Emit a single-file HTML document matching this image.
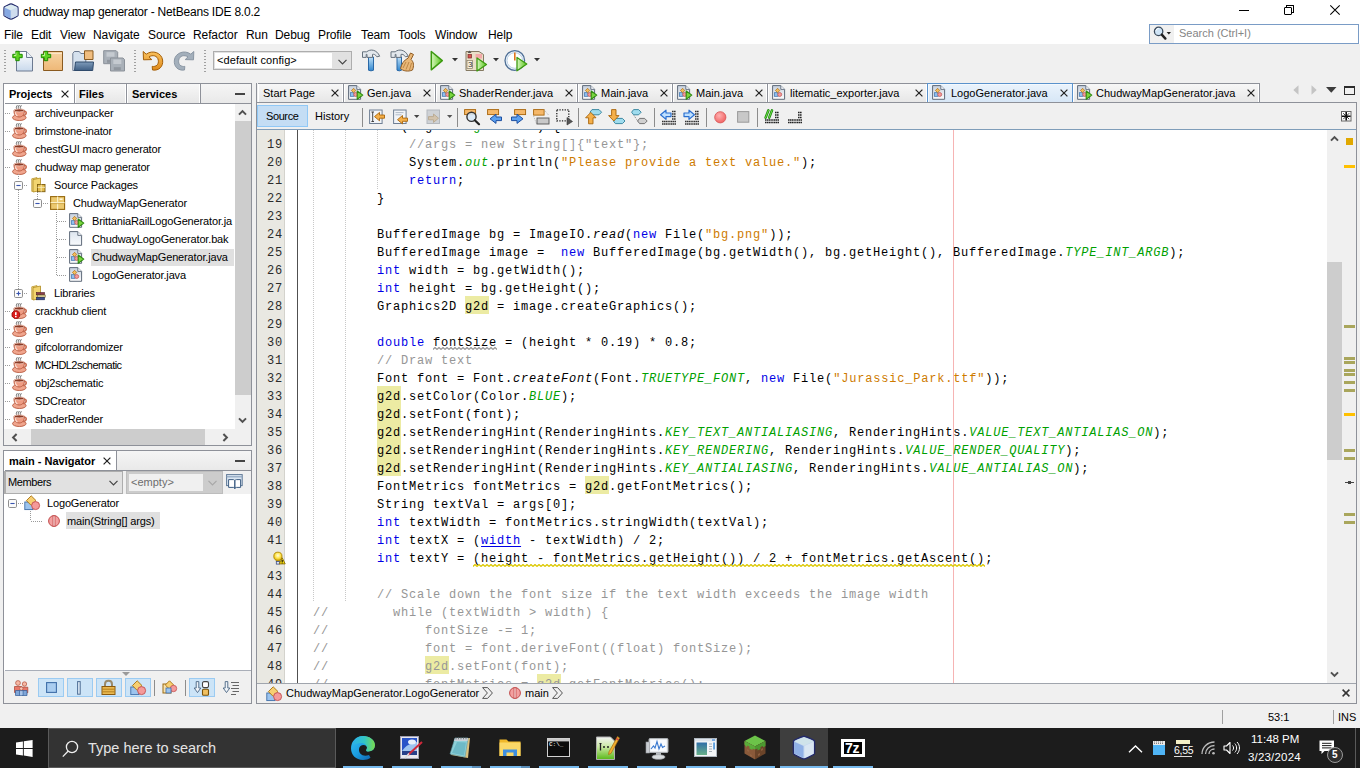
<!DOCTYPE html>
<html>
<head>
<meta charset="utf-8">
<title>chudway map generator - NetBeans IDE 8.0.2</title>
<style>
*{box-sizing:border-box;margin:0;padding:0}
html,body{width:1360px;height:768px;overflow:hidden;background:#f0f0f0}
body{font-family:"Liberation Sans",sans-serif;font-size:11px;color:#000;position:relative;line-height:1}
.a{position:absolute}
svg{position:absolute;overflow:visible}
#title{position:absolute;left:0;top:0;width:1360px;height:23px;background:#fff}
#title .t{position:absolute;left:23px;top:5px;font-size:12px;letter-spacing:-0.2px;white-space:nowrap;line-height:14px}
#menu{position:absolute;left:0;top:23px;width:1360px;height:21px;background:#fff}
#menu span{position:absolute;top:5px;font-size:12px;white-space:nowrap;line-height:14px;letter-spacing:-0.1px}
#toolbar{position:absolute;left:0;top:45px;width:1360px;height:33px;background:#f0f0f0}
.grip{position:absolute;top:5px;width:3px;height:22px;background-image:linear-gradient(#a0a0a0 1px,transparent 1px);background-size:2px 3px;background-repeat:repeat-y}
.combo{position:absolute;border:1px solid #adadad;background:#e1e1e1}
.panel{position:absolute;border:1px solid #8e9199;background:#fff}
.tabrow{position:absolute;left:0;top:0;right:0;height:20px;background:linear-gradient(#f5f5f5,#e9e9e9);border-bottom:1px solid #8e9199}
.tab{position:absolute;top:0;height:19px;border-right:1px solid #8e9199;white-space:nowrap;background:linear-gradient(#f7f7f7,#e7e7e7);box-shadow:inset -1px 0 0 #fff, inset 1px 0 0 #fff}
.tab.sel{background:#fff;height:19px}
.tab.esel{background:linear-gradient(#eaf3fc,#d6e6f6);height:20px;border-color:#5a92cc !important;box-shadow:-1px 0 0 #5a92cc, inset 1px 1px 0 #f4f9fe}
.tab .x{position:absolute;top:5px}
.tab b,.tab i{position:absolute;top:4px;font-style:normal;line-height:13px}
.row{position:absolute;left:0;height:18px;white-space:nowrap}
.row span{position:absolute;top:3px;line-height:13px;letter-spacing:-0.15px}
.hl{position:absolute;background:#e0e0e0}
#taskbar{position:absolute;left:0;top:728px;width:1360px;height:40px;background:#1c1c1c}
#tsearch{position:absolute;left:48px;top:0;width:288px;height:40px;background:#333;border:1px solid #5a5a5a}
#tsearch .ph{position:absolute;left:39px;top:10px;font-size:14.5px;color:#e4e4e4;white-space:nowrap;line-height:18px}
.tul{position:absolute;top:38px;height:2px;background:#76b9ed}
#status{position:absolute;left:0;top:704px;width:1360px;height:24px;background:#f0f0f0}
.code{font-family:"Liberation Mono",monospace;font-size:12px;letter-spacing:0.8px;line-height:18px;white-space:pre}
.ln{position:absolute;left:0;width:1044px;height:18px}
.ln .n{position:absolute;left:10px;top:2px;color:#2b2b2b}
.ln .c{position:absolute;left:56px;top:2px}
.k{color:#0000e6}.s{color:#ce7b00}.cm{color:#969696}.sf{color:#00a000;font-style:italic}.it{font-style:italic}
.lk{color:#0000e6;text-decoration:underline;text-underline-offset:2px}
.mo{background:linear-gradient(#eceba3,#eceba3) 0 0/100% 18px no-repeat;padding-top:4px}
.sb{position:absolute;background:#f0f0f0}
.thumb{position:absolute;background:#cdcdcd}
</style>
</head>
<body>
<div id="title"><svg style="left:3px;top:3px" width="16" height="17" viewBox="0 0 24 25">
<path d="M12 1.200c1 0 9.800 3.600 10.300 4.500.4.700.4 12.500 0 13.300-.5.900-9.300 5-10.300 5s-9.800-4.100-10.300-5c-.4-.8-.4-12.600 0-13.300C2.200 4.800 11 1.200 12 1.200z" fill="#c5d8ee" stroke="#232a6a" stroke-width="1.800"/>
<path d="M2.300 6.300L12 10.600l9.700-4.300L12 2.300z" fill="#dcebf0"/><path d="M2.300 6.800L11.500 11v12L2.300 18.600z" fill="#86a8e2"/><path d="M21.700 6.800L12.500 11v12l9.200-4.400z" fill="#cfdcee"/>
</svg><span class="t">chudway map generator - NetBeans IDE 8.0.2</span><div class="a" style="left:1239px;top:10px;width:10px;height:1px;background:#000"></div><div class="a" style="left:1284px;top:7px;width:8px;height:8px;border:1px solid #000;border-radius:1px"></div><div class="a" style="left:1286px;top:5px;width:8px;height:8px;border:1px solid #000;border-left:none;border-bottom:none;border-radius:0 1px 0 0"></div><div class="a" style="left:1286px;top:5px;width:1px;height:2px;background:#000"></div><div class="a" style="left:1292px;top:12px;width:2px;height:1px;background:#000"></div><svg style="left:1330px;top:5px" width="10" height="10" viewBox="0 0 10 10"><path d="M0.300 0.300 L9.700 9.700 M9.700 0.300 L0.300 9.700" stroke="#000" stroke-width="1.050" fill="none"/></svg></div>
<div id="menu"><span style="left:4px">File</span><span style="left:31px">Edit</span><span style="left:60px">View</span><span style="left:93px">Navigate</span><span style="left:148px">Source</span><span style="left:193px">Refactor</span><span style="left:246px">Run</span><span style="left:275px">Debug</span><span style="left:318px">Profile</span><span style="left:361px">Team</span><span style="left:398px">Tools</span><span style="left:435px">Window</span><span style="left:488px">Help</span><div class="a" style="left:1149px;top:1px;width:210px;height:20px;background:#fff;border:1px solid #7a9cc6"></div><div class="a" style="left:1150px;top:2px;width:24px;height:18px;background:#f0f0f0"></div><svg style="left:1153px;top:3px" width="18" height="15" viewBox="0 0 18 15">
<circle cx="5.600" cy="5.400" r="4.200" fill="#cfe4f6" stroke="#3a4a5c" stroke-width="1.300"/><path d="M2.800 4.800a3 3 0 0 1 3-2.400" stroke="#fff" stroke-width="1" fill="none"/><path d="M8.800 8.600 L12.400 12.600" stroke="#222" stroke-width="2.400" stroke-linecap="round"/>
<path d="M13.600 6h4.400l-2.200 2.600z" fill="#222"/></svg><span style="left:1179px;top:3px;color:#858585;font-size:11px;letter-spacing:0">Search (Ctrl+I)</span></div>
<div id="toolbar"><div class="grip" style="left:4px"></div><div class="grip" style="left:134px"></div><div class="grip" style="left:204px"></div><svg style="left:12px;top:5px" width="22" height="22" viewBox="0 0 22 22"><defs><linearGradient id="gpage" x1="0" y1="0" x2="0" y2="1"><stop offset="0" stop-color="#ffffff"/><stop offset="1" stop-color="#c9d9ec"/></linearGradient><linearGradient id="gpg" x1="0" y1="0" x2="0" y2="1"><stop offset="0" stop-color="#c6d0dd"/><stop offset="1" stop-color="#fdfdfe"/></linearGradient><linearGradient id="gpg2" x1="0" y1="0" x2="0" y2="1"><stop offset="0" stop-color="#dde5ef"/><stop offset="1" stop-color="#f8fafc"/></linearGradient></defs><path d="M4.5 1.5h10l6 6v13.5h-16z" fill="url(#gpage)" stroke="#6c7a90" stroke-width="1"/><path d="M14.5 1.5v6h6" fill="#e9f0f8" stroke="#6c7a90" stroke-width="1"/><path d="M0.8 4.3h3v-3h3.4v3h3v3.4h-3v3h-3.4v-3h-3z" fill="#5fd321" stroke="#1d8a00" stroke-width="1"/><path d="M2.0 5.5h2v-3" stroke="#d8ffb8" stroke-width="1" fill="none" opacity=".8"/></svg><svg style="left:41px;top:5px" width="23" height="22" viewBox="0 0 23 22"><defs><linearGradient id="gbox" x1="0" y1="0" x2="0" y2="1"><stop offset="0" stop-color="#f7d3a2"/><stop offset="1" stop-color="#eeb877"/></linearGradient></defs><path d="M2.5 1.5h19v19h-19z" fill="url(#gbox)" stroke="#8a5a1f" stroke-width="1"/><path d="M3 3.5h18" stroke="#fbe6c8" stroke-width="1"/><path d="M0.3 4.3h3v-3h3.4v3h3v3.4h-3v3h-3.4v-3h-3z" fill="#5fd321" stroke="#1d8a00" stroke-width="1"/><path d="M1.5 5.5h2v-3" stroke="#d8ffb8" stroke-width="1" fill="none" opacity=".8"/></svg><svg style="left:72px;top:5px" width="22" height="22" viewBox="0 0 22 22"><defs><linearGradient id="gfold" x1="0" y1="0" x2="0" y2="1"><stop offset="0" stop-color="#7f9cbb"/><stop offset="1" stop-color="#3f5f84"/></linearGradient></defs><path d="M0.8 20.5v-17l1.5-2h5l1.5 2h5v17z" fill="#d5e1ee" stroke="#6c7a90" stroke-width="1"/><path d="M12.5 0.8h8.5v8.7h-8.5z" fill="#f0bd7f" stroke="#8a5a1f" stroke-width="1"/><path d="M2.5 20.5l1-8.5h18l-0.8 8.5z" fill="url(#gfold)" stroke="#2f4a6b" stroke-width="1"/></svg><svg style="left:103px;top:5px" width="23" height="22" viewBox="0 0 23 22"><path d="M0.7 0.7h12.5l1.5 1.5v11.5h-14z" fill="#a9b0b8" stroke="#8b9199" stroke-width="1"/><rect x="3.5" y="2.2" width="8" height="4.5" fill="#c5cad0"/><rect x="4" y="9.8" width="7" height="3" fill="#90969e"/><path d="M7.5 8h12.5l1.5 1.5v11.5h-14z" fill="#a9b0b8" stroke="#8b9199" stroke-width="1"/><rect x="10.3" y="9.5" width="8" height="4.5" fill="#c5cad0"/><rect x="10.8" y="17.2" width="7" height="3" fill="#90969e"/></svg><svg style="left:142px;top:5px" width="23" height="22" viewBox="0 0 23 22"><defs><linearGradient id="gundo" x1="0" y1="0" x2="0" y2="1"><stop offset="0" stop-color="#f9c15e"/><stop offset="1" stop-color="#e08a1a"/></linearGradient></defs><path d="M1.2 1.5 L1.5 9.8 L9.8 9.6 L7 6.9 C10.5 4.6 15.5 5.5 16.3 10.2 C17 14.6 14 17 10.2 16.4 L10.5 20 C17 21 21.5 16.5 20.6 10 C19.6 2.8 10.5 -0.5 4.2 4.2 Z" fill="url(#gundo)" stroke="#a45f08" stroke-width="1" stroke-linejoin="round"/></svg><svg style="left:172px;top:5px" width="23" height="22" viewBox="0 0 23 22"><path d="M21.8 1.5 L21.5 9.8 L13.2 9.6 L16 6.9 C12.5 4.6 7.5 5.5 6.7 10.2 C6 14.6 9 17 12.8 16.4 L12.5 20 C6 21 1.5 16.5 2.4 10 C3.4 2.8 12.5 -0.5 18.8 4.2 Z" fill="#a3afbb" stroke="#8a96a3" stroke-width="1" stroke-linejoin="round"/></svg><div class="combo" style="left:213px;top:6px;width:139px;height:19px"></div><div class="a" style="left:215px;top:8px;width:117px;height:15px;background:#fff"></div><span class="a" style="left:217px;top:9px;font-size:11px;line-height:13px;white-space:nowrap;letter-spacing:.1px">&lt;default config&gt;</span><svg style="left:338px;top:14px" width="9" height="6" viewBox="0 0 9 6"><path d="M0.5 0.8 L4.5 4.8 L8.5 0.8" fill="none" stroke="#444" stroke-width="1.2"/></svg><svg style="left:361px;top:4px" width="20" height="23" viewBox="0 0 20 23"><defs><linearGradient id="ghan" x1="0" y1="0" x2="0" y2="1"><stop offset="0" stop-color="#bfe0f7"/><stop offset="1" stop-color="#2f86cf"/></linearGradient></defs><path d="M7.5 8h5v13.2q-2.5 1.3-5 0z" fill="url(#ghan)" stroke="#2a68a6" stroke-width="1"/><path d="M1.500 2.800h4.200c3.500-3 10-2.500 13 4.400l-2.800.6c-1.600-2.400-3-2.800-4.400-2.400v3h-5.500v-3h-.8v3h-3.700z" fill="#e3e8ed" stroke="#66727e" stroke-width="1" stroke-linejoin="round"/></svg><svg style="left:390px;top:4px" width="25" height="23" viewBox="0 0 25 23"><path d="M7 8h4.5v13.2q-2.2 1.3-4.5 0z" fill="url(#ghan)" stroke="#2a68a6" stroke-width="1"/><path d="M1 2.800h4.200c3.500-3 10-2.500 13 4.400l-2.800.6c-1.600-2.400-3-2.800-4.400-2.400v3h-5v-3h-.8v3h-4.200z" fill="#e3e8ed" stroke="#66727e" stroke-width="1" stroke-linejoin="round"/><path d="M20.5 4 L23.5 5.5 L21 10.5 C24 13 24 17 22.5 21 C18 23 13 22 10.5 19.5 C11.5 15 14 11 18 9.2 Z" fill="#e9b777" stroke="#8f5b22" stroke-width="1" stroke-linejoin="round"/><path d="M13 19l3-6M16 20.5l3-7.5M19.5 21l2-7" stroke="#b07a3a" stroke-width=".8" fill="none"/></svg><svg style="left:430px;top:5px" width="14" height="22" viewBox="0 0 14 22"><defs><linearGradient id="grun" x1="0" y1="0" x2="1" y2="0"><stop offset="0" stop-color="#d9f7c0"/><stop offset="1" stop-color="#57c41a"/></linearGradient></defs><path d="M1.3 1.5 L12.3 10.6 L1.3 19.8 Z" fill="url(#grun)" stroke="#3c9a10" stroke-width="1.5" stroke-linejoin="round"/></svg><svg style="left:451.5px;top:13px" width="6" height="4" viewBox="0 0 6 4"><path d="M0 0h6l-3 3.2z" fill="#333"/></svg><svg style="left:465px;top:4px" width="23" height="23" viewBox="0 0 23 23"><path d="M1 2.5h13l4.5 3v16h-17.5z" fill="#eadfc8" stroke="#857a63" stroke-width="1"/><rect x="10.5" y="5" width="6.5" height="4.5" fill="#f4a9a9"/><path d="M4.5 1.5l2 2.5h-4z" fill="#555"/><rect x="3" y="5.5" width="3.5" height="3.5" fill="#d9534f" stroke="#7a2a28" stroke-width=".7"/><rect x="2" y="11.5" width="5.5" height="8" fill="#f7f0dd" stroke="#857a63" stroke-width=".7"/><path d="M12 9 L21.5 15.5 L12 22 Z" fill="url(#grun)" stroke="#3c9a10" stroke-width="1.3" stroke-linejoin="round"/></svg><span class="a" style="left:468px;top:16px;font-size:8px;line-height:8px;color:#333">3</span><svg style="left:492.7px;top:13px" width="6" height="4" viewBox="0 0 6 4"><path d="M0 0h6l-3 3.2z" fill="#333"/></svg><svg style="left:504px;top:4px" width="24" height="23" viewBox="0 0 24 23"><circle cx="10.8" cy="11.5" r="9.8" fill="#eaf3fb" stroke="#4f6f96" stroke-width="1.3"/><circle cx="10.8" cy="11.5" r="7.8" fill="#fff" stroke="#bcd0e4" stroke-width="1"/><path d="M10.8 3.5v8" stroke="#e0761a" stroke-width="1.6"/><path d="M13 8.5 L22.8 15 L13 21.8 Z" fill="url(#grun)" stroke="#3c9a10" stroke-width="1.3" stroke-linejoin="round"/></svg><svg style="left:534px;top:13px" width="6" height="4" viewBox="0 0 6 4"><path d="M0 0h6l-3 3.2z" fill="#333"/></svg></div>
<div class="panel" style="left:3px;top:83px;width:249px;height:363px"><div class="a" style="left:1px;top:0;width:246px;height:361px"><div class="tabrow"><div class="tab sel" style="left:-1px;width:71px"><b style="left:5px">Projects</b><svg style="left:57px;top:6px" width="8" height="8" viewBox="0 0 8 8"><path d="M0.6 0.6L7.4 7.4M7.4 0.6L0.6 7.4" stroke="#222" stroke-width="1.2" fill="none"/></svg></div><div class="tab" style="left:70px;width:52px"><b style="left:4px">Files</b></div><div class="tab" style="left:122px;width:74px"><b style="left:5px">Services</b></div><div class="a" style="left:230px;top:9px;width:10px;height:2px;background:#444"></div></div><div class="a" style="left:0;top:20px;width:230px;height:325px;overflow:hidden"><div class="a" style="left:0px;top:9px;width:6px;height:1px;background-image:linear-gradient(90deg,#9a9a9a 1px,transparent 1px);background-size:2px 1px"></div><svg style="left:7px;top:1px" width="16" height="16" viewBox="0 0 16 16"><path d="M5.300 0.200l-1 2.200.8 2.200M7.300 0l-1 2.400.8 2.400M9.300 0.200l-1 2.200.8 2.200" stroke="#5a5a5a" stroke-width=".9" fill="none"/><ellipse cx="7.3" cy="12.6" rx="6.8" ry="2.9" fill="#f0a58d" stroke="#b85a40" stroke-width=".9"/><path d="M11.2 6.5c3.6-1.2 4.4 3 0.2 4.2" fill="none" stroke="#c9694e" stroke-width="1.5"/><path d="M2 5.2h10.4c0.3 3.8-1.2 6.6-5.2 6.8c-4-0.2-5.5-3-5.2-6.8z" fill="#ee9b82" stroke="#b85a40" stroke-width=".9"/><ellipse cx="7.2" cy="5.4" rx="5" ry="1.5" fill="#8a3b26" stroke="#f6cdbf" stroke-width=".8"/><path d="M3.4 7.2c0 2 0.8 3.2 2 3.9" stroke="#fbe0d6" stroke-width="1.1" fill="none"/></svg><div class="row" style="top:0px"><span style="left:30px">archiveunpacker</span></div><div class="a" style="left:0px;top:27px;width:6px;height:1px;background-image:linear-gradient(90deg,#9a9a9a 1px,transparent 1px);background-size:2px 1px"></div><svg style="left:7px;top:19px" width="16" height="16" viewBox="0 0 16 16"><path d="M5.300 0.200l-1 2.200.8 2.200M7.300 0l-1 2.400.8 2.400M9.300 0.200l-1 2.200.8 2.200" stroke="#5a5a5a" stroke-width=".9" fill="none"/><ellipse cx="7.3" cy="12.6" rx="6.8" ry="2.9" fill="#f0a58d" stroke="#b85a40" stroke-width=".9"/><path d="M11.2 6.5c3.6-1.2 4.4 3 0.2 4.2" fill="none" stroke="#c9694e" stroke-width="1.5"/><path d="M2 5.2h10.4c0.3 3.8-1.2 6.6-5.2 6.8c-4-0.2-5.5-3-5.2-6.8z" fill="#ee9b82" stroke="#b85a40" stroke-width=".9"/><ellipse cx="7.2" cy="5.4" rx="5" ry="1.5" fill="#8a3b26" stroke="#f6cdbf" stroke-width=".8"/><path d="M3.4 7.2c0 2 0.8 3.2 2 3.9" stroke="#fbe0d6" stroke-width="1.1" fill="none"/></svg><div class="row" style="top:18px"><span style="left:30px">brimstone-inator</span></div><div class="a" style="left:0px;top:45px;width:6px;height:1px;background-image:linear-gradient(90deg,#9a9a9a 1px,transparent 1px);background-size:2px 1px"></div><svg style="left:7px;top:37px" width="16" height="16" viewBox="0 0 16 16"><path d="M5.300 0.200l-1 2.200.8 2.200M7.300 0l-1 2.400.8 2.400M9.300 0.200l-1 2.200.8 2.200" stroke="#5a5a5a" stroke-width=".9" fill="none"/><ellipse cx="7.3" cy="12.6" rx="6.8" ry="2.9" fill="#f0a58d" stroke="#b85a40" stroke-width=".9"/><path d="M11.2 6.5c3.6-1.2 4.4 3 0.2 4.2" fill="none" stroke="#c9694e" stroke-width="1.5"/><path d="M2 5.2h10.4c0.3 3.8-1.2 6.6-5.2 6.8c-4-0.2-5.5-3-5.2-6.8z" fill="#ee9b82" stroke="#b85a40" stroke-width=".9"/><ellipse cx="7.2" cy="5.4" rx="5" ry="1.5" fill="#8a3b26" stroke="#f6cdbf" stroke-width=".8"/><path d="M3.4 7.2c0 2 0.8 3.2 2 3.9" stroke="#fbe0d6" stroke-width="1.1" fill="none"/></svg><div class="row" style="top:36px"><span style="left:30px">chestGUI macro generator</span></div><div class="a" style="left:0px;top:63px;width:6px;height:1px;background-image:linear-gradient(90deg,#9a9a9a 1px,transparent 1px);background-size:2px 1px"></div><svg style="left:7px;top:55px" width="16" height="16" viewBox="0 0 16 16"><path d="M5.300 0.200l-1 2.200.8 2.200M7.300 0l-1 2.400.8 2.400M9.300 0.200l-1 2.200.8 2.200" stroke="#5a5a5a" stroke-width=".9" fill="none"/><ellipse cx="7.3" cy="12.6" rx="6.8" ry="2.9" fill="#f0a58d" stroke="#b85a40" stroke-width=".9"/><path d="M11.2 6.5c3.6-1.2 4.4 3 0.2 4.2" fill="none" stroke="#c9694e" stroke-width="1.5"/><path d="M2 5.2h10.4c0.3 3.8-1.2 6.6-5.2 6.8c-4-0.2-5.5-3-5.2-6.8z" fill="#ee9b82" stroke="#b85a40" stroke-width=".9"/><ellipse cx="7.2" cy="5.4" rx="5" ry="1.5" fill="#8a3b26" stroke="#f6cdbf" stroke-width=".8"/><path d="M3.4 7.2c0 2 0.8 3.2 2 3.9" stroke="#fbe0d6" stroke-width="1.1" fill="none"/></svg><div class="row" style="top:54px"><span style="left:30px">chudway map generator</span></div><svg style="left:9px;top:77px" width="9" height="9" viewBox="0 0 9 9"><rect x="0.5" y="0.5" width="8" height="8" rx="1.2" fill="#fbfbfb" stroke="#8f8f8f" stroke-width="1"/><path d="M2.4 4.5h4.2" stroke="#3a55b0" stroke-width="1.1"/></svg><div class="a" style="left:19px;top:81px;width:4px;height:1px;background-image:linear-gradient(90deg,#9a9a9a 1px,transparent 1px);background-size:2px 1px"></div><svg style="left:26px;top:73px" width="15" height="16" viewBox="0 0 15 16"><path d="M0.8 1.8 L6 0.6 L6 13.2 L0.8 14.4 Z" fill="#f7e29a" stroke="#b99326" stroke-width=".8"/><path d="M2 2.6 L9.5 1 L9.5 13.6 L2 15 Z" fill="#f2d470" stroke="#b08a1e" stroke-width=".8"/><rect x="6.5" y="7.5" width="7.5" height="7.2" fill="#e3bc4e" stroke="#7d5c0e" stroke-width=".9"/><path d="M6.5 10.3h7.5M10.2 7.5v7.2" stroke="#fbeeb8" stroke-width=".9"/></svg><div class="row" style="top:72px"><span style="left:49px">Source Packages</span></div><svg style="left:28px;top:95px" width="9" height="9" viewBox="0 0 9 9"><rect x="0.5" y="0.5" width="8" height="8" rx="1.2" fill="#fbfbfb" stroke="#8f8f8f" stroke-width="1"/><path d="M2.4 4.5h4.2" stroke="#3a55b0" stroke-width="1.1"/></svg><div class="a" style="left:38px;top:99px;width:5px;height:1px;background-image:linear-gradient(90deg,#9a9a9a 1px,transparent 1px);background-size:2px 1px"></div><svg style="left:45px;top:92px" width="15.2" height="14" viewBox="0 0 15.2 14"><rect x="0.6" y="0.6" width="14" height="12.8" fill="#ecc96f" stroke="#96690f" stroke-width="1.1"/><path d="M0.6 6.6h14M7.6 0.6v12.8" stroke="#fbefc4" stroke-width="1.2"/><path d="M0.6 7.6h14" stroke="#b88b2a" stroke-width=".6"/><rect x="9.6" y="2.4" width="3" height="1.6" fill="#fff7dc"/></svg><div class="row" style="top:90px"><span style="left:68px">ChudwayMapGenerator</span></div><div class="a" style="left:52px;top:117px;width:10px;height:1px;background-image:linear-gradient(90deg,#9a9a9a 1px,transparent 1px);background-size:2px 1px"></div><svg style="left:64px;top:109px" width="16" height="15" viewBox="0 0 16 15"><path d="M0.6 0.6h8.2l3.800 3.800v9.900h-12z" fill="url(#gpg)" stroke="#5f6b7a" stroke-width="1"/><path d="M8.800 0.600v3.800h3.800" fill="#f4f7fb" stroke="#5f6b7a" stroke-width=".9"/><rect x="2.300" y="7.700" width="3.800" height="3.600" fill="#8fc0ee" stroke="#3a6ea8" stroke-width=".7"/><path d="M5.600 3.300l2.200 2.200-2.200 2.200-2.200-2.200z" fill="#f4bc5a" stroke="#a86a10" stroke-width=".7"/><circle cx="7.700" cy="9.500" r="2" fill="#f29a9a" stroke="#c05050" stroke-width=".7"/><path d="M9.200 6 L14.800 10.100 L9.200 14.300 Z" fill="#7ad63f" stroke="#2f8a10" stroke-width="1.100" stroke-linejoin="round"/></svg><div class="row" style="top:108px"><span style="left:87px">BrittaniaRailLogoGenerator.ja</span></div><div class="a" style="left:52px;top:135px;width:10px;height:1px;background-image:linear-gradient(90deg,#9a9a9a 1px,transparent 1px);background-size:2px 1px"></div><svg style="left:64px;top:127px" width="16" height="15" viewBox="0 0 16 15"><path d="M0.6 0.6h8.2l3.800 3.800v9.900h-12z" fill="url(#gpg2)" stroke="#5f6b7a" stroke-width="1"/><path d="M8.800 0.600v3.800h3.800" fill="#f4f7fb" stroke="#5f6b7a" stroke-width=".9"/></svg><div class="row" style="top:126px"><span style="left:87px">ChudwayLogoGenerator.bak</span></div><div class="a" style="left:52px;top:153px;width:10px;height:1px;background-image:linear-gradient(90deg,#9a9a9a 1px,transparent 1px);background-size:2px 1px"></div><svg style="left:64px;top:145px" width="16" height="15" viewBox="0 0 16 15"><path d="M0.6 0.6h8.2l3.800 3.800v9.900h-12z" fill="url(#gpg)" stroke="#5f6b7a" stroke-width="1"/><path d="M8.800 0.600v3.800h3.800" fill="#f4f7fb" stroke="#5f6b7a" stroke-width=".9"/><rect x="2.300" y="7.700" width="3.800" height="3.600" fill="#8fc0ee" stroke="#3a6ea8" stroke-width=".7"/><path d="M5.600 3.300l2.200 2.200-2.200 2.200-2.200-2.200z" fill="#f4bc5a" stroke="#a86a10" stroke-width=".7"/><circle cx="7.700" cy="9.500" r="2" fill="#f29a9a" stroke="#c05050" stroke-width=".7"/><path d="M9.200 6 L14.800 10.100 L9.200 14.300 Z" fill="#7ad63f" stroke="#2f8a10" stroke-width="1.100" stroke-linejoin="round"/></svg><div class="hl" style="left:86px;top:145px;width:143px;height:17px"></div><div class="row" style="top:144px"><span style="left:87px">ChudwayMapGenerator.java</span></div><div class="a" style="left:52px;top:171px;width:10px;height:1px;background-image:linear-gradient(90deg,#9a9a9a 1px,transparent 1px);background-size:2px 1px"></div><svg style="left:64px;top:163px" width="16" height="15" viewBox="0 0 16 15"><path d="M0.6 0.6h8.2l3.800 3.800v9.900h-12z" fill="url(#gpg)" stroke="#5f6b7a" stroke-width="1"/><path d="M8.800 0.600v3.800h3.800" fill="#f4f7fb" stroke="#5f6b7a" stroke-width=".9"/><rect x="2.300" y="7.700" width="3.800" height="3.600" fill="#8fc0ee" stroke="#3a6ea8" stroke-width=".7"/><path d="M5.600 3.300l2.200 2.200-2.200 2.200-2.200-2.200z" fill="#f4bc5a" stroke="#a86a10" stroke-width=".7"/><circle cx="7.700" cy="9.500" r="2" fill="#f29a9a" stroke="#c05050" stroke-width=".7"/></svg><div class="row" style="top:162px"><span style="left:87px">LogoGenerator.java</span></div><svg style="left:9px;top:185px" width="9" height="9" viewBox="0 0 9 9"><rect x="0.5" y="0.5" width="8" height="8" rx="1.2" fill="#fbfbfb" stroke="#8f8f8f" stroke-width="1"/><path d="M2.4 4.5h4.2" stroke="#3a55b0" stroke-width="1.1"/><path d="M4.5 2.4v4.2" stroke="#3a55b0" stroke-width="1.1"/></svg><div class="a" style="left:19px;top:189px;width:4px;height:1px;background-image:linear-gradient(90deg,#9a9a9a 1px,transparent 1px);background-size:2px 1px"></div><svg style="left:26px;top:181px" width="15" height="16" viewBox="0 0 15 16"><path d="M0.8 1.8 L6 0.6 L6 13.2 L0.8 14.4 Z" fill="#f7e29a" stroke="#b99326" stroke-width=".8"/><path d="M2 2.6 L9.5 1 L9.5 13.6 L2 15 Z" fill="#f2d470" stroke="#b08a1e" stroke-width=".8"/><rect x="5.5" y="7.6" width="8" height="2.2" fill="#8c3c4c" stroke="#4a1a24" stroke-width=".6"/><rect x="6.2" y="10" width="8" height="2.2" fill="#e0d2a0" stroke="#6a5a20" stroke-width=".6"/><rect x="5.5" y="12.4" width="8" height="2.4" fill="#3c4e90" stroke="#18234e" stroke-width=".6"/></svg><div class="row" style="top:180px"><span style="left:49px">Libraries</span></div><div class="a" style="left:0px;top:207px;width:6px;height:1px;background-image:linear-gradient(90deg,#9a9a9a 1px,transparent 1px);background-size:2px 1px"></div><svg style="left:7px;top:199px" width="16" height="16" viewBox="0 0 16 16"><path d="M5.300 0.200l-1 2.200.8 2.200M7.300 0l-1 2.400.8 2.400M9.300 0.200l-1 2.200.8 2.200" stroke="#5a5a5a" stroke-width=".9" fill="none"/><ellipse cx="7.3" cy="12.6" rx="6.8" ry="2.9" fill="#f0a58d" stroke="#b85a40" stroke-width=".9"/><path d="M11.2 6.5c3.6-1.2 4.4 3 0.2 4.2" fill="none" stroke="#c9694e" stroke-width="1.5"/><path d="M2 5.2h10.4c0.3 3.8-1.2 6.6-5.2 6.8c-4-0.2-5.5-3-5.2-6.8z" fill="#ee9b82" stroke="#b85a40" stroke-width=".9"/><ellipse cx="7.2" cy="5.4" rx="5" ry="1.5" fill="#8a3b26" stroke="#f6cdbf" stroke-width=".8"/><path d="M3.4 7.2c0 2 0.8 3.2 2 3.9" stroke="#fbe0d6" stroke-width="1.1" fill="none"/><path d="M2.200 7.800h3.200l2.200 2.200v3.200l-2.200 2.200h-3.200l-2.200-2.200v-3.200z" fill="#dc1c1c" stroke="#900c0c" stroke-width=".8"/><rect x="3" y="9.200" width="1.600" height="3" fill="#fff"/><rect x="3" y="13" width="1.600" height="1.300" fill="#fff"/></svg><div class="row" style="top:198px"><span style="left:30px">crackhub client</span></div><div class="a" style="left:0px;top:225px;width:6px;height:1px;background-image:linear-gradient(90deg,#9a9a9a 1px,transparent 1px);background-size:2px 1px"></div><svg style="left:7px;top:217px" width="16" height="16" viewBox="0 0 16 16"><path d="M5.300 0.200l-1 2.200.8 2.200M7.300 0l-1 2.400.8 2.400M9.300 0.200l-1 2.200.8 2.200" stroke="#5a5a5a" stroke-width=".9" fill="none"/><ellipse cx="7.3" cy="12.6" rx="6.8" ry="2.9" fill="#f0a58d" stroke="#b85a40" stroke-width=".9"/><path d="M11.2 6.5c3.6-1.2 4.4 3 0.2 4.2" fill="none" stroke="#c9694e" stroke-width="1.5"/><path d="M2 5.2h10.4c0.3 3.8-1.2 6.6-5.2 6.8c-4-0.2-5.5-3-5.2-6.8z" fill="#ee9b82" stroke="#b85a40" stroke-width=".9"/><ellipse cx="7.2" cy="5.4" rx="5" ry="1.5" fill="#8a3b26" stroke="#f6cdbf" stroke-width=".8"/><path d="M3.4 7.2c0 2 0.8 3.2 2 3.9" stroke="#fbe0d6" stroke-width="1.1" fill="none"/></svg><div class="row" style="top:216px"><span style="left:30px">gen</span></div><div class="a" style="left:0px;top:243px;width:6px;height:1px;background-image:linear-gradient(90deg,#9a9a9a 1px,transparent 1px);background-size:2px 1px"></div><svg style="left:7px;top:235px" width="16" height="16" viewBox="0 0 16 16"><path d="M5.300 0.200l-1 2.200.8 2.200M7.300 0l-1 2.400.8 2.400M9.300 0.200l-1 2.200.8 2.200" stroke="#5a5a5a" stroke-width=".9" fill="none"/><ellipse cx="7.3" cy="12.6" rx="6.8" ry="2.9" fill="#f0a58d" stroke="#b85a40" stroke-width=".9"/><path d="M11.2 6.5c3.6-1.2 4.4 3 0.2 4.2" fill="none" stroke="#c9694e" stroke-width="1.5"/><path d="M2 5.2h10.4c0.3 3.8-1.2 6.6-5.2 6.8c-4-0.2-5.5-3-5.2-6.8z" fill="#ee9b82" stroke="#b85a40" stroke-width=".9"/><ellipse cx="7.2" cy="5.4" rx="5" ry="1.5" fill="#8a3b26" stroke="#f6cdbf" stroke-width=".8"/><path d="M3.4 7.2c0 2 0.8 3.2 2 3.9" stroke="#fbe0d6" stroke-width="1.1" fill="none"/></svg><div class="row" style="top:234px"><span style="left:30px">gifcolorrandomizer</span></div><div class="a" style="left:0px;top:261px;width:6px;height:1px;background-image:linear-gradient(90deg,#9a9a9a 1px,transparent 1px);background-size:2px 1px"></div><svg style="left:7px;top:253px" width="16" height="16" viewBox="0 0 16 16"><path d="M5.300 0.200l-1 2.200.8 2.200M7.300 0l-1 2.400.8 2.400M9.300 0.200l-1 2.200.8 2.200" stroke="#5a5a5a" stroke-width=".9" fill="none"/><ellipse cx="7.3" cy="12.6" rx="6.8" ry="2.9" fill="#f0a58d" stroke="#b85a40" stroke-width=".9"/><path d="M11.2 6.5c3.6-1.2 4.4 3 0.2 4.2" fill="none" stroke="#c9694e" stroke-width="1.5"/><path d="M2 5.2h10.4c0.3 3.8-1.2 6.6-5.2 6.8c-4-0.2-5.5-3-5.2-6.8z" fill="#ee9b82" stroke="#b85a40" stroke-width=".9"/><ellipse cx="7.2" cy="5.4" rx="5" ry="1.5" fill="#8a3b26" stroke="#f6cdbf" stroke-width=".8"/><path d="M3.4 7.2c0 2 0.8 3.2 2 3.9" stroke="#fbe0d6" stroke-width="1.1" fill="none"/></svg><div class="row" style="top:252px"><span style="left:30px;letter-spacing:-0.55px">MCHDL2schematic</span></div><div class="a" style="left:0px;top:279px;width:6px;height:1px;background-image:linear-gradient(90deg,#9a9a9a 1px,transparent 1px);background-size:2px 1px"></div><svg style="left:7px;top:271px" width="16" height="16" viewBox="0 0 16 16"><path d="M5.300 0.200l-1 2.200.8 2.200M7.300 0l-1 2.400.8 2.400M9.300 0.200l-1 2.200.8 2.200" stroke="#5a5a5a" stroke-width=".9" fill="none"/><ellipse cx="7.3" cy="12.6" rx="6.8" ry="2.9" fill="#f0a58d" stroke="#b85a40" stroke-width=".9"/><path d="M11.2 6.5c3.6-1.2 4.4 3 0.2 4.2" fill="none" stroke="#c9694e" stroke-width="1.5"/><path d="M2 5.2h10.4c0.3 3.8-1.2 6.6-5.2 6.8c-4-0.2-5.5-3-5.2-6.8z" fill="#ee9b82" stroke="#b85a40" stroke-width=".9"/><ellipse cx="7.2" cy="5.4" rx="5" ry="1.5" fill="#8a3b26" stroke="#f6cdbf" stroke-width=".8"/><path d="M3.4 7.2c0 2 0.8 3.2 2 3.9" stroke="#fbe0d6" stroke-width="1.1" fill="none"/></svg><div class="row" style="top:270px"><span style="left:30px">obj2schematic</span></div><div class="a" style="left:0px;top:297px;width:6px;height:1px;background-image:linear-gradient(90deg,#9a9a9a 1px,transparent 1px);background-size:2px 1px"></div><svg style="left:7px;top:289px" width="16" height="16" viewBox="0 0 16 16"><path d="M5.300 0.200l-1 2.200.8 2.200M7.300 0l-1 2.400.8 2.400M9.300 0.200l-1 2.200.8 2.200" stroke="#5a5a5a" stroke-width=".9" fill="none"/><ellipse cx="7.3" cy="12.6" rx="6.8" ry="2.9" fill="#f0a58d" stroke="#b85a40" stroke-width=".9"/><path d="M11.2 6.5c3.6-1.2 4.4 3 0.2 4.2" fill="none" stroke="#c9694e" stroke-width="1.5"/><path d="M2 5.2h10.4c0.3 3.8-1.2 6.6-5.2 6.8c-4-0.2-5.5-3-5.2-6.8z" fill="#ee9b82" stroke="#b85a40" stroke-width=".9"/><ellipse cx="7.2" cy="5.4" rx="5" ry="1.5" fill="#8a3b26" stroke="#f6cdbf" stroke-width=".8"/><path d="M3.4 7.2c0 2 0.8 3.2 2 3.9" stroke="#fbe0d6" stroke-width="1.1" fill="none"/></svg><div class="row" style="top:288px"><span style="left:30px">SDCreator</span></div><div class="a" style="left:0px;top:315px;width:6px;height:1px;background-image:linear-gradient(90deg,#9a9a9a 1px,transparent 1px);background-size:2px 1px"></div><svg style="left:7px;top:307px" width="16" height="16" viewBox="0 0 16 16"><path d="M5.300 0.200l-1 2.200.8 2.200M7.300 0l-1 2.400.8 2.400M9.300 0.200l-1 2.200.8 2.200" stroke="#5a5a5a" stroke-width=".9" fill="none"/><ellipse cx="7.3" cy="12.6" rx="6.8" ry="2.9" fill="#f0a58d" stroke="#b85a40" stroke-width=".9"/><path d="M11.2 6.5c3.6-1.2 4.4 3 0.2 4.2" fill="none" stroke="#c9694e" stroke-width="1.5"/><path d="M2 5.2h10.4c0.3 3.8-1.2 6.6-5.2 6.8c-4-0.2-5.5-3-5.2-6.8z" fill="#ee9b82" stroke="#b85a40" stroke-width=".9"/><ellipse cx="7.2" cy="5.4" rx="5" ry="1.5" fill="#8a3b26" stroke="#f6cdbf" stroke-width=".8"/><path d="M3.4 7.2c0 2 0.8 3.2 2 3.9" stroke="#fbe0d6" stroke-width="1.1" fill="none"/></svg><div class="row" style="top:306px"><span style="left:30px">shaderRender</span></div><div class="a" style="left:13px;top:86px;width:1px;height:99px;background-image:linear-gradient(#9a9a9a 1px,transparent 1px);background-size:1px 2px"></div><div class="a" style="left:13px;top:70px;width:1px;height:6px;background-image:linear-gradient(#9a9a9a 1px,transparent 1px);background-size:1px 2px"></div><div class="a" style="left:32px;top:88px;width:1px;height:7px;background-image:linear-gradient(#9a9a9a 1px,transparent 1px);background-size:1px 2px"></div><div class="a" style="left:51px;top:108px;width:1px;height:64px;background-image:linear-gradient(#9a9a9a 1px,transparent 1px);background-size:1px 2px"></div></div><div class="sb" style="left:230px;top:20px;width:16px;height:325px"></div><div class="thumb" style="left:230px;top:37px;width:16px;height:274px"></div><svg style="left:233px;top:25px" width="9" height="9" viewBox="0 0 9 9"><path d="M1 5.6 L4.5 2.1 L8 5.6" fill="none" stroke="#505050" stroke-width="2"/></svg><svg style="left:233px;top:333px" width="9" height="9" viewBox="0 0 9 9"><path d="M1 1.4 L4.5 4.9 L8 1.4" fill="none" stroke="#505050" stroke-width="2"/></svg><div class="sb" style="left:0;top:345px;width:230px;height:16px"></div><div class="thumb" style="left:26px;top:345px;width:174px;height:16px"></div><svg style="left:6px;top:349px" width="9" height="9" viewBox="0 0 9 9"><path d="M5.6 1 L2.1 4.5 L5.6 8" fill="none" stroke="#505050" stroke-width="2"/></svg><svg style="left:217px;top:349px" width="9" height="9" viewBox="0 0 9 9"><path d="M1.4 1 L4.9 4.5 L1.4 8" fill="none" stroke="#505050" stroke-width="2"/></svg><div class="sb" style="left:230px;top:345px;width:16px;height:16px"></div><div class="sb" style="left:-1px;top:345px;width:1px;height:16px"></div></div></div>
<div class="panel" style="left:3px;top:450px;width:249px;height:254px"><div class="a" style="left:1px;top:0;width:246px;height:252px"><div class="tabrow"><div class="tab sel" style="left:-1px;width:113px"><b style="left:5px">main - Navigator</b><svg style="left:99px;top:6px" width="8" height="8" viewBox="0 0 8 8"><path d="M0.6 0.6L7.4 7.4M7.4 0.6L0.6 7.4" stroke="#222" stroke-width="1.2" fill="none"/></svg></div><div class="a" style="left:230px;top:9px;width:10px;height:2px;background:#444"></div></div><div class="a" style="left:0;top:20px;width:246px;height:23px;background:#f0f0f0"></div><div class="combo" style="left:0;top:20px;width:118px;height:23px;background:#e1e1e1"></div><span class="a" style="left:3px;top:25px;line-height:13px;letter-spacing:-0.4px">Members</span><svg style="left:104px;top:29px" width="9" height="6" viewBox="0 0 9 6"><path d="M0.5 0.8 L4.5 4.8 L8.5 0.8" fill="none" stroke="#444" stroke-width="1.2"/></svg><div class="combo" style="left:121px;top:20px;width:97px;height:23px;background:#cccccc;border-color:#bdbdbd"></div><div class="a" style="left:124px;top:23px;width:74px;height:17px;background:#f0f0f0"></div><span class="a" style="left:126px;top:25px;line-height:13px;color:#6d6d6d">&lt;empty&gt;</span><svg style="left:203px;top:29px" width="9" height="6" viewBox="0 0 9 6"><path d="M0.5 0.8 L4.5 4.8 L8.5 0.8" fill="none" stroke="#a8a8a8" stroke-width="1.2"/></svg><svg style="left:221px;top:23px" width="17" height="16" viewBox="0 0 17 16"><rect x="0.6" y="0.6" width="15.6" height="11" fill="#dbe6f2" stroke="#5f7896" stroke-width="1"/><path d="M0.6 2.8h15.6" stroke="#8fa5bf" stroke-width="1.2"/><path d="M2.6 5.6h4.6c1 0 1.6.6 1.6 1.4v7.6c0-.8-.6-1.2-1.6-1.2H2.6zM14.6 5.6H10.4c-1 0-1.6.6-1.6 1.4v7.6c0-.8.6-1.2 1.6-1.2h4.2z" fill="#fff" stroke="#3f5f84" stroke-width="1"/></svg><svg style="left:3px;top:48px" width="9" height="9" viewBox="0 0 9 9"><rect x="0.5" y="0.5" width="8" height="8" rx="1.2" fill="#fbfbfb" stroke="#8f8f8f" stroke-width="1"/><path d="M2.4 4.5h4.2" stroke="#3a55b0" stroke-width="1.1"/></svg><div class="a" style="left:13px;top:52px;width:5px;height:1px;background-image:linear-gradient(90deg,#9a9a9a 1px,transparent 1px);background-size:2px 1px"></div><svg style="left:19px;top:44px" width="16" height="15" viewBox="0 0 16 15"><rect x="0.8" y="7" width="8.2" height="7.6" fill="#9cc4ee" stroke="#3f6ea8" stroke-width=".9"/><path d="M7.2 0.8l4.8 4.8-4.8 4.8-4.8-4.8z" fill="#f7cf72" stroke="#a8720e" stroke-width=".9"/><circle cx="11.6" cy="10.6" r="4" fill="#f49a9a" stroke="#c25050" stroke-width=".9"/></svg><div class="row" style="top:43px"><span style="left:42px">LogoGenerator</span></div><div class="a" style="left:25px;top:60px;width:1px;height:10px;background-image:linear-gradient(#9a9a9a 1px,transparent 1px);background-size:1px 2px"></div><div class="a" style="left:26px;top:70px;width:11px;height:1px;background-image:linear-gradient(90deg,#9a9a9a 1px,transparent 1px);background-size:2px 1px"></div><svg style="left:42.5px;top:64px" width="12" height="12" viewBox="0 0 12 12"><circle cx="6" cy="6" r="5.4" fill="#f3a0a0" stroke="#c24a4a" stroke-width="1"/><rect x="5" y="0.8" width="2" height="10.4" fill="#fde3e3" stroke="#c24a4a" stroke-width=".8"/></svg><div class="hl" style="left:61px;top:61px;width:94px;height:17px"></div><div class="row" style="top:61px"><span style="left:62px">main(String[] args)</span></div><div class="a" style="left:0;top:219px;width:246px;height:33px;background:#f0f0f0;border-top:1px solid #a9aeb8"></div><svg style="left:117px;top:221px" width="8" height="4" viewBox="0 0 8 4"><path d="M0 0h8l-4 4z" fill="#9a9a9a"/></svg><svg style="left:8px;top:229px" width="17" height="16" viewBox="0 0 17 16"><circle cx="5" cy="3" r="2.4" fill="#f6b8a4" stroke="#b0503c" stroke-width=".7"/><circle cx="11.5" cy="4" r="2.2" fill="#f6b8a4" stroke="#b0503c" stroke-width=".7"/><path d="M1.500 6.500h7v6h-7z" fill="#e8786a" stroke="#a8402e" stroke-width=".7"/><path d="M8.800 7.200h6v5.500h-6z" fill="#e8786a" stroke="#a8402e" stroke-width=".7"/><path d="M2.5 10.5h4.5v5h-4.5zM9 10.5h5v5h-5z" fill="#7fa6d8" stroke="#2f5a96" stroke-width=".7"/><circle cx="8.300" cy="8.600" r="1.700" fill="#f8c8b8" stroke="#b0503c" stroke-width=".6"/><path d="M6.5 10.6h3.6v4.9h-3.6z" fill="#a8c4e8" stroke="#2f5a96" stroke-width=".6"/></svg><div class="a" style="left:33px;top:227px;width:26px;height:19px;background:#cce4f7;border:1px solid #9bcbf2"></div><svg style="left:41px;top:231px" width="11" height="11" viewBox="0 0 11 11"><rect x="0.6" y="0.6" width="9.8" height="9.8" fill="#a9cdf0" stroke="#3f6ea8" stroke-width="1.1"/></svg><div class="a" style="left:61.5px;top:227px;width:26px;height:19px;background:#cce4f7;border:1px solid #9bcbf2"></div><svg style="left:72px;top:230px" width="4" height="14" viewBox="0 0 4 14"><rect x="0.6" y="0.6" width="2.6" height="12.6" fill="#dce9f6" stroke="#4f6f96" stroke-width="1"/></svg><div class="a" style="left:90.5px;top:227px;width:26px;height:19px;background:#cce4f7;border:1px solid #9bcbf2"></div><svg style="left:96px;top:228px" width="15" height="16" viewBox="0 0 15 16"><path d="M4 8V5.2c0-4.6 7-4.6 7 0V8" fill="none" stroke="#9a8a6a" stroke-width="2"/><rect x="1" y="7.5" width="13" height="8" fill="#e9b850" stroke="#8a5a0e" stroke-width="1"/><path d="M1.5 10.2h12M1.5 12.8h12" stroke="#b07a1a" stroke-width=".9"/></svg><div class="a" style="left:119.5px;top:227px;width:26px;height:19px;background:#cce4f7;border:1px solid #9bcbf2"></div><svg style="left:125px;top:229px" width="16" height="15" viewBox="0 0 16 15"><rect x="0.8" y="7" width="8.2" height="7.6" fill="#9cc4ee" stroke="#3f6ea8" stroke-width=".9"/><path d="M7.2 0.8l4.8 4.8-4.8 4.8-4.8-4.8z" fill="#f7cf72" stroke="#a8720e" stroke-width=".9"/><circle cx="11.6" cy="10.6" r="4" fill="#f49a9a" stroke="#c25050" stroke-width=".9"/></svg><div class="a" style="left:148.5px;top:229px;width:1px;height:16px;background:#8c8c8c"></div><svg style="left:157px;top:229px" width="16" height="16" viewBox="0 0 16 16"><rect x="1" y="4" width="8" height="9" fill="#f7e2b0" stroke="#9a6a12" stroke-width="1"/><path d="M7.5 0.8l4.2 4.2-4.2 4.2-4.2-4.2z" fill="#f7cf72" stroke="#a8720e" stroke-width=".9"/><circle cx="11.5" cy="8.5" r="3.2" fill="#f49a9a" stroke="#c25050" stroke-width=".8"/><rect x="4" y="8" width="5" height="5" fill="#9cc4ee" stroke="#3f6ea8" stroke-width=".8"/></svg><div class="a" style="left:180px;top:229px;width:1px;height:16px;background:#8c8c8c"></div><div class="a" style="left:184px;top:227px;width:26px;height:19px;background:#cce4f7;border:1px solid #9bcbf2"></div><svg style="left:189px;top:230px" width="16" height="15" viewBox="0 0 16 15"><path d="M2.200 0.600h2.600v6.400h2l-3.300 4.600-3.300-4.600h2z" fill="#eef3f8" stroke="#4a6482" stroke-width=".9" stroke-linejoin="round"/><rect x="8.5" y="0.6" width="6" height="6" rx="1.5" fill="#fff" stroke="#444" stroke-width="1.1"/><rect x="8.5" y="8.2" width="6" height="6" rx="1" fill="#f0c060" stroke="#7a5208" stroke-width="1.1"/></svg><div class="a" style="left:-1px;top:20px;width:1px;height:23px;background:#adadad"></div><div class="a" style="left:-1px;top:220px;width:1px;height:32px;background:#f0f0f0"></div><svg style="left:218px;top:230px" width="17" height="15" viewBox="0 0 17 15"><path d="M2.200 0.600h2.600v6.400h2l-3.300 4.600-3.300-4.600h2z" fill="#eef3f8" stroke="#4a6482" stroke-width=".9" stroke-linejoin="round"/><path d="M8 1.5h8M9.5 4.5h6.5M8 7.5h8M9.5 10.5h6.5M8 13.5h5" stroke="#666" stroke-width="1.2"/></svg></div></div>
<div class="a" style="left:256px;top:83px;width:1px;height:20px;background:#8e9199"></div><div class="tab" style="left:258px;top:83px;width:86px;height:19px;border-top:1px solid #8e9199"><i style="left:5px;top:3px">Start Page</i><svg style="left:73px;top:5px" width="8" height="8" viewBox="0 0 8 8"><path d="M0.6 0.6L7.4 7.4M7.4 0.6L0.6 7.4" stroke="#222" stroke-width="1.2" fill="none"/></svg></div><div class="tab" style="left:344px;top:83px;width:92px;height:19px;border-top:1px solid #8e9199"><svg style="left:4px;top:1px" width="16" height="15" viewBox="0 0 16 15"><path d="M0.6 0.6h8.2l3.800 3.800v9.900h-12z" fill="url(#gpg)" stroke="#5f6b7a" stroke-width="1"/><path d="M8.800 0.600v3.800h3.800" fill="#f4f7fb" stroke="#5f6b7a" stroke-width=".9"/><rect x="2.300" y="7.700" width="3.800" height="3.600" fill="#8fc0ee" stroke="#3a6ea8" stroke-width=".7"/><path d="M5.600 3.300l2.200 2.200-2.200 2.200-2.200-2.200z" fill="#f4bc5a" stroke="#a86a10" stroke-width=".7"/><circle cx="7.700" cy="9.500" r="2" fill="#f29a9a" stroke="#c05050" stroke-width=".7"/><path d="M9.200 6 L14.800 10.100 L9.200 14.300 Z" fill="#7ad63f" stroke="#2f8a10" stroke-width="1.100" stroke-linejoin="round"/></svg><i style="left:23px;top:3px">Gen.java</i><svg style="left:79px;top:5px" width="8" height="8" viewBox="0 0 8 8"><path d="M0.6 0.6L7.4 7.4M7.4 0.6L0.6 7.4" stroke="#222" stroke-width="1.2" fill="none"/></svg></div><div class="tab" style="left:436px;top:83px;width:142px;height:19px;border-top:1px solid #8e9199"><svg style="left:4px;top:1px" width="16" height="15" viewBox="0 0 16 15"><path d="M0.6 0.6h8.2l3.800 3.800v9.900h-12z" fill="url(#gpg)" stroke="#5f6b7a" stroke-width="1"/><path d="M8.800 0.600v3.800h3.800" fill="#f4f7fb" stroke="#5f6b7a" stroke-width=".9"/><rect x="2.300" y="7.700" width="3.800" height="3.600" fill="#8fc0ee" stroke="#3a6ea8" stroke-width=".7"/><path d="M5.600 3.300l2.200 2.200-2.200 2.200-2.200-2.200z" fill="#f4bc5a" stroke="#a86a10" stroke-width=".7"/><circle cx="7.700" cy="9.500" r="2" fill="#f29a9a" stroke="#c05050" stroke-width=".7"/><path d="M9.200 6 L14.800 10.100 L9.200 14.300 Z" fill="#7ad63f" stroke="#2f8a10" stroke-width="1.100" stroke-linejoin="round"/></svg><i style="left:23px;top:3px">ShaderRender.java</i><svg style="left:129px;top:5px" width="8" height="8" viewBox="0 0 8 8"><path d="M0.6 0.6L7.4 7.4M7.4 0.6L0.6 7.4" stroke="#222" stroke-width="1.2" fill="none"/></svg></div><div class="tab" style="left:578px;top:83px;width:95px;height:19px;border-top:1px solid #8e9199"><svg style="left:4px;top:1px" width="16" height="15" viewBox="0 0 16 15"><path d="M0.6 0.6h8.2l3.800 3.800v9.900h-12z" fill="url(#gpg)" stroke="#5f6b7a" stroke-width="1"/><path d="M8.800 0.600v3.800h3.800" fill="#f4f7fb" stroke="#5f6b7a" stroke-width=".9"/><rect x="2.300" y="7.700" width="3.800" height="3.600" fill="#8fc0ee" stroke="#3a6ea8" stroke-width=".7"/><path d="M5.600 3.300l2.200 2.200-2.200 2.200-2.200-2.200z" fill="#f4bc5a" stroke="#a86a10" stroke-width=".7"/><circle cx="7.700" cy="9.500" r="2" fill="#f29a9a" stroke="#c05050" stroke-width=".7"/><path d="M9.200 6 L14.800 10.100 L9.200 14.300 Z" fill="#7ad63f" stroke="#2f8a10" stroke-width="1.100" stroke-linejoin="round"/></svg><i style="left:23px;top:3px">Main.java</i><svg style="left:82px;top:5px" width="8" height="8" viewBox="0 0 8 8"><path d="M0.6 0.6L7.4 7.4M7.4 0.6L0.6 7.4" stroke="#222" stroke-width="1.2" fill="none"/></svg></div><div class="tab" style="left:673px;top:83px;width:95px;height:19px;border-top:1px solid #8e9199"><svg style="left:4px;top:1px" width="16" height="15" viewBox="0 0 16 15"><path d="M0.6 0.6h8.2l3.800 3.800v9.900h-12z" fill="url(#gpg)" stroke="#5f6b7a" stroke-width="1"/><path d="M8.800 0.600v3.800h3.800" fill="#f4f7fb" stroke="#5f6b7a" stroke-width=".9"/><rect x="2.300" y="7.700" width="3.800" height="3.600" fill="#8fc0ee" stroke="#3a6ea8" stroke-width=".7"/><path d="M5.600 3.300l2.200 2.200-2.200 2.200-2.200-2.200z" fill="#f4bc5a" stroke="#a86a10" stroke-width=".7"/><circle cx="7.700" cy="9.500" r="2" fill="#f29a9a" stroke="#c05050" stroke-width=".7"/><path d="M9.200 6 L14.800 10.100 L9.200 14.300 Z" fill="#7ad63f" stroke="#2f8a10" stroke-width="1.100" stroke-linejoin="round"/></svg><i style="left:23px;top:3px">Main.java</i><svg style="left:82px;top:5px" width="8" height="8" viewBox="0 0 8 8"><path d="M0.6 0.6L7.4 7.4M7.4 0.6L0.6 7.4" stroke="#222" stroke-width="1.2" fill="none"/></svg></div><div class="tab" style="left:768px;top:83px;width:160px;height:19px;border-top:1px solid #8e9199"><svg style="left:4px;top:1px" width="16" height="15" viewBox="0 0 16 15"><path d="M0.6 0.6h8.2l3.800 3.800v9.900h-12z" fill="url(#gpg)" stroke="#5f6b7a" stroke-width="1"/><path d="M8.800 0.600v3.800h3.800" fill="#f4f7fb" stroke="#5f6b7a" stroke-width=".9"/><rect x="2.300" y="7.700" width="3.800" height="3.600" fill="#8fc0ee" stroke="#3a6ea8" stroke-width=".7"/><path d="M5.600 3.300l2.200 2.200-2.200 2.200-2.200-2.200z" fill="#f4bc5a" stroke="#a86a10" stroke-width=".7"/><circle cx="7.700" cy="9.500" r="2" fill="#f29a9a" stroke="#c05050" stroke-width=".7"/></svg><i style="left:22px;top:3px">litematic_exporter.java</i><svg style="left:147px;top:5px" width="8" height="8" viewBox="0 0 8 8"><path d="M0.6 0.6L7.4 7.4M7.4 0.6L0.6 7.4" stroke="#222" stroke-width="1.2" fill="none"/></svg></div><div class="tab esel" style="left:928px;top:83px;width:145px;height:20px;border-top:1px solid #8e9199"><svg style="left:4px;top:1px" width="16" height="15" viewBox="0 0 16 15"><path d="M0.6 0.6h8.2l3.800 3.800v9.900h-12z" fill="url(#gpg)" stroke="#5f6b7a" stroke-width="1"/><path d="M8.800 0.600v3.800h3.800" fill="#f4f7fb" stroke="#5f6b7a" stroke-width=".9"/><rect x="2.300" y="7.700" width="3.800" height="3.600" fill="#8fc0ee" stroke="#3a6ea8" stroke-width=".7"/><path d="M5.600 3.300l2.200 2.200-2.200 2.200-2.200-2.200z" fill="#f4bc5a" stroke="#a86a10" stroke-width=".7"/><circle cx="7.700" cy="9.500" r="2" fill="#f29a9a" stroke="#c05050" stroke-width=".7"/></svg><i style="left:23px;top:3px">LogoGenerator.java</i><svg style="left:132px;top:5px" width="8" height="8" viewBox="0 0 8 8"><path d="M0.6 0.6L7.4 7.4M7.4 0.6L0.6 7.4" stroke="#222" stroke-width="1.2" fill="none"/></svg></div><div class="tab" style="left:1073px;top:83px;width:187px;height:19px;border-top:1px solid #8e9199"><svg style="left:4px;top:1px" width="16" height="15" viewBox="0 0 16 15"><path d="M0.6 0.6h8.2l3.800 3.800v9.900h-12z" fill="url(#gpg)" stroke="#5f6b7a" stroke-width="1"/><path d="M8.800 0.600v3.800h3.800" fill="#f4f7fb" stroke="#5f6b7a" stroke-width=".9"/><rect x="2.300" y="7.700" width="3.800" height="3.600" fill="#8fc0ee" stroke="#3a6ea8" stroke-width=".7"/><path d="M5.600 3.300l2.200 2.200-2.200 2.200-2.200-2.200z" fill="#f4bc5a" stroke="#a86a10" stroke-width=".7"/><circle cx="7.700" cy="9.500" r="2" fill="#f29a9a" stroke="#c05050" stroke-width=".7"/><path d="M9.200 6 L14.800 10.100 L9.200 14.300 Z" fill="#7ad63f" stroke="#2f8a10" stroke-width="1.100" stroke-linejoin="round"/></svg><i style="left:23px;top:3px">ChudwayMapGenerator.java</i><svg style="left:174px;top:5px" width="8" height="8" viewBox="0 0 8 8"><path d="M0.6 0.6L7.4 7.4M7.4 0.6L0.6 7.4" stroke="#222" stroke-width="1.2" fill="none"/></svg></div><svg style="left:1293px;top:85px" width="6" height="10" viewBox="0 0 6 10"><path d="M5.5 0.3v9.4L0.3 5z" fill="#c4c4c4"/></svg><svg style="left:1311px;top:85px" width="6" height="10" viewBox="0 0 6 10"><path d="M0.5 0.3v9.4L5.7 5z" fill="#c4c4c4"/></svg><svg style="left:1326px;top:87px" width="11" height="6" viewBox="0 0 11 6"><path d="M0 0h10.5L5.25 5.8z" fill="#3c3c3c"/></svg><div class="a" style="left:1344px;top:86px;width:11px;height:9px;border:1px solid #2c2c2c;border-top-width:2px"></div><div class="a" style="left:256px;top:102px;width:1101px;height:602px;border:1px solid #8e9199;background:#fff"><div class="a" style="left:0;top:0;width:1099px;height:26px;background:#f0f0f0"></div><div class="a" style="left:0;top:26px;width:1099px;height:1px;background:#7f9db9"></div><div class="a" style="left:0;top:2px;width:51px;height:22px;background:#c4ddf4;border:1px solid #90c8f6"></div><span class="a" style="left:9px;top:7px;line-height:13px;letter-spacing:-0.4px">Source</span><span class="a" style="left:58px;top:7px;line-height:13px">History</span><div class="a" style="left:105px;top:5px;width:1px;height:19px;background:#8c8c8c"></div><svg style="left:112px;top:6px" width="17" height="16" viewBox="0 0 17 16"><rect x="0.6" y="1" width="12.5" height="13.5" fill="#f1f4f8" stroke="#6f7f94" stroke-width="1"/><path d="M2.4 3h2.6M3.7 3v9.5M2.4 12.5h2.6" stroke="#333" stroke-width=".9" fill="none"/><path d="M10.5 3.4l-5 4.2 5 4.2v-2.6h5v-3.2h-5z" fill="#f5b04a" stroke="#a8640a" stroke-width=".9" stroke-linejoin="round"/></svg><svg style="left:136px;top:6px" width="16" height="16" viewBox="0 0 16 16"><rect x="0.6" y="1" width="12.5" height="13.5" fill="#f1f4f8" stroke="#6f7f94" stroke-width="1"/><path d="M2.5 3.6h8M2.5 5.8h6" stroke="#a9b4c2" stroke-width=".9"/><path d="M9.5 6.5l-5 4.2 5 4.2v-2.6h5v-3.2h-5z" fill="#f5b04a" stroke="#a8640a" stroke-width=".9" stroke-linejoin="round"/></svg><svg style="left:157px;top:12px" width="6" height="3" viewBox="0 0 6 3"><path d="M0 0h5.4l-2.7 3z" fill="#444"/></svg><svg style="left:168px;top:6px" width="16" height="16" viewBox="0 0 16 16"><rect x="2" y="1" width="12.5" height="13.5" fill="#cfd2d6" stroke="#b4b8bd" stroke-width="1"/><path d="M6.5 6.5l5 4.2-5 4.2v-2.6h-5v-3.2h5z" fill="#d3c3ac" stroke="#b8a88e" stroke-width=".9" transform="translate(2,-1.5)"/></svg><svg style="left:190px;top:12px" width="6" height="3" viewBox="0 0 6 3"><path d="M0 0h5.4l-2.7 3z" fill="#555"/></svg><div class="a" style="left:200px;top:5px;width:1px;height:19px;background:#8c8c8c"></div><svg style="left:207px;top:6px" width="17" height="16" viewBox="0 0 17 16"><rect x="0.6" y="0.6" width="11" height="5" fill="#f5b86a" stroke="#a8640a" stroke-width=".9"/><circle cx="7.5" cy="7.8" r="4.6" fill="#d7e8f7" fill-opacity=".9" stroke="#333" stroke-width="1.4"/><path d="M10.8 11.2l4.2 4" stroke="#222" stroke-width="2.2" stroke-linecap="round"/></svg><svg style="left:230px;top:6px" width="17" height="16" viewBox="0 0 17 16"><rect x="0.6" y="0.6" width="11" height="5" fill="#f5b86a" stroke="#a8640a" stroke-width=".9"/><path d="M9 5.2l-6 4.6 6 4.6v-2.8h5.5v-3.6h-5.5z" fill="#5aa0f0" stroke="#1d4fa0" stroke-width="1" stroke-linejoin="round"/></svg><svg style="left:253px;top:6px" width="17" height="16" viewBox="0 0 17 16"><rect x="4.6" y="0.6" width="11" height="5" fill="#f5b86a" stroke="#a8640a" stroke-width=".9"/><path d="M7 5.2l6 4.6-6 4.6v-2.8h-5.5v-3.6h5.5z" fill="#5aa0f0" stroke="#1d4fa0" stroke-width="1" stroke-linejoin="round"/></svg><svg style="left:276px;top:6px" width="17" height="16" viewBox="0 0 17 16"><rect x="0.6" y="0.6" width="10.5" height="5.5" fill="#f5b86a" stroke="#a8640a" stroke-width=".9"/><path d="M0.6 7l3 8M11 0.6l5 6" stroke="#999" stroke-width=".7" stroke-dasharray="1 1"/><rect x="4" y="9" width="12" height="6" fill="#c9c9c9" stroke="#555" stroke-width=".9"/></svg><svg style="left:299px;top:6px" width="17" height="16" viewBox="0 0 17 16"><rect x="0.8" y="0.8" width="12" height="11" fill="none" stroke="#222" stroke-width="1.3" stroke-dasharray="1.3 1.3"/><path d="M11 8.5l5.5 4-5.5 3.5z" fill="#555" stroke="#333" stroke-width=".6"/></svg><div class="a" style="left:321px;top:5px;width:1px;height:19px;background:#8c8c8c"></div><svg style="left:328px;top:6px" width="17" height="16" viewBox="0 0 17 16"><path d="M7 0.6h7l2.6 2.6-2.6 2.6h-7l-2-2.6z" fill="#9fdcee" stroke="#2f7f9a" stroke-width=".9"/><path d="M5.8 3.4l-5.2 5.4h3v6h4.4v-6h3z" fill="#f5b04a" stroke="#a8640a" stroke-width=".9" stroke-linejoin="round"/></svg><svg style="left:351px;top:6px" width="17" height="16" viewBox="0 0 17 16"><path d="M7.4 9.4h7l2.6 2.6-2.6 2.6h-7l-2-2.6z" fill="#9fdcee" stroke="#2f7f9a" stroke-width=".9"/><path d="M5.8 12l-5.2-5.4h3v-6h4.4v6h3z" fill="#f5b04a" stroke="#a8640a" stroke-width=".9" stroke-linejoin="round"/></svg><svg style="left:374px;top:6px" width="17" height="16" viewBox="0 0 17 16"><path d="M2.6 0.6h5l2.6 2.6-2.6 2.6h-5l-2-2.6z" fill="#9fdcee" stroke="#2f7f9a" stroke-width=".9"/><path d="M3 6.5l4 6" stroke="#666" stroke-width=".8" stroke-dasharray="1 1"/><path d="M8.6 9.4h5l2.6 2.6-2.6 2.6h-5l-2-2.6z" fill="#d0d0d0" stroke="#666" stroke-width=".9"/></svg><div class="a" style="left:396.5px;top:5px;width:1px;height:19px;background:#8c8c8c"></div><svg style="left:403px;top:6px" width="17" height="16" viewBox="0 0 17 16"><path d="M12 2.5h4M12 5h4M12 7.5h4M12 10h4M2 12.5h14M2 15h14" stroke="#333" stroke-width="1.5" stroke-dasharray="1.4 .4"/><path d="M6 1.2l-5.4 4.6 5.4 4.6v-2.8h5v-3.6h-5z" fill="#bfe0ff" stroke="#2a6fd0" stroke-width="1.2" stroke-linejoin="round"/></svg><svg style="left:426px;top:6px" width="17" height="16" viewBox="0 0 17 16"><path d="M12 2.5h4M12 5h4M12 7.5h4M12 10h4M2 12.5h14M2 15h14" stroke="#333" stroke-width="1.5" stroke-dasharray="1.4 .4"/><path d="M6 1.2l5.4 4.6-5.4 4.6v-2.8h-5v-3.6h5z" fill="#bfe0ff" stroke="#2a6fd0" stroke-width="1.2" stroke-linejoin="round"/></svg><div class="a" style="left:448.5px;top:5px;width:1px;height:19px;background:#8c8c8c"></div><svg style="left:457px;top:8px" width="13" height="13" viewBox="0 0 13 13"><defs><radialGradient id="gred" cx=".4" cy=".35" r=".7"><stop offset="0" stop-color="#ffb0b0"/><stop offset="1" stop-color="#f06060"/></radialGradient></defs><circle cx="6.3" cy="6.3" r="5.6" fill="url(#gred)" stroke="#d95a5a" stroke-width=".9"/></svg><svg style="left:480px;top:8px" width="13" height="12" viewBox="0 0 13 12"><rect x="0.6" y="0.6" width="11.2" height="10.6" fill="#c8c8c8" stroke="#9a9a9a" stroke-width="1"/></svg><div class="a" style="left:500px;top:5px;width:1px;height:19px;background:#8c8c8c"></div><svg style="left:507px;top:6px" width="16" height="16" viewBox="0 0 16 16"><path d="M11 3.5h4M11 6h4M11 8.5h4M1 11h14M1 13.5h14" stroke="#222" stroke-width="1.6" stroke-dasharray="1.4 .4"/><path d="M1.6 8.6L4.4 1.4M5.2 8.6L8 1.4" fill="none" stroke="#1f8a10" stroke-width="2.6" stroke-linecap="round"/><path d="M1.6 8.6L4.4 1.4M5.2 8.6L8 1.4" fill="none" stroke="#6fe04a" stroke-width="1" stroke-linecap="round"/></svg><svg style="left:530px;top:6px" width="16" height="16" viewBox="0 0 16 16"><path d="M11 3.5h4M11 6h4M11 8.5h4M1 11h14M1 13.5h14" stroke="#222" stroke-width="1.6" stroke-dasharray="1.4 .4"/></svg><svg style="left:1084px;top:8px" width="11" height="11" viewBox="0 0 11 11"><rect x="0.5" y="0.5" width="9.5" height="9.5" fill="#fff" stroke="#666" stroke-width="1"/><path d="M5.2 1v8.6M1 5.2h8.6" stroke="#111" stroke-width="1.6"/><path d="M2.2 2.2l6 6M8.2 2.2l-6 6" stroke="#111" stroke-width=".8"/></svg><div class="a code" style="left:0;top:27px;width:1070px;height:553px;overflow:hidden;background:#fff"><div class="a" style="left:0;top:0;width:27px;height:554px;background:#e9e8e2"></div><div class="a" style="left:27px;top:0;width:1px;height:554px;background:#d4d3cd"></div><div class="a" style="left:40px;top:0;width:1px;height:554px;background:#505050"></div><div class="a" style="left:56px;top:0px;width:1px;height:471px;background-image:linear-gradient(#c8c8c8 1px,transparent 1px);background-size:1px 2px"></div><div class="a" style="left:88px;top:0px;width:1px;height:471px;background-image:linear-gradient(#c8c8c8 1px,transparent 1px);background-size:1px 2px"></div><div class="a" style="left:120px;top:0px;width:1px;height:59px;background-image:linear-gradient(#c8c8c8 1px,transparent 1px);background-size:1px 2px"></div><div class="a" style="left:696px;top:0;width:1px;height:554px;background:#f6b4b4"></div><div class="ln" style="top:-14px"><span class="n">18</span><span class="c">        <span class="k">if</span> (args.<span style="color:#00a000">length</span> == 0) {</span></div><div class="ln" style="top:4px"><span class="n">19</span><span class="c"><span class="cm">            //args = new String[]{"text"};</span></span></div><div class="ln" style="top:22px"><span class="n">20</span><span class="c">            System.<span class="sf">out</span>.println(<span class="s">"Please provide a text value."</span>);</span></div><div class="ln" style="top:40px"><span class="n">21</span><span class="c">            <span class="k">return</span>;</span></div><div class="ln" style="top:58px"><span class="n">22</span><span class="c">        }</span></div><div class="ln" style="top:76px"><span class="n">23</span><span class="c"></span></div><div class="ln" style="top:94px"><span class="n">24</span><span class="c">        BufferedImage bg = ImageIO.<span class="it">read</span>(<span class="k">new</span> File(<span class="s">"bg.png"</span>));</span></div><div class="ln" style="top:112px"><span class="n">25</span><span class="c">        BufferedImage image =  <span class="k">new</span> BufferedImage(bg.getWidth(), bg.getHeight(), BufferedImage.<span class="sf">TYPE_INT_ARGB</span>);</span></div><div class="ln" style="top:130px"><span class="n">26</span><span class="c">        <span class="k">int</span> width = bg.getWidth();</span></div><div class="ln" style="top:148px"><span class="n">27</span><span class="c">        <span class="k">int</span> height = bg.getHeight();</span></div><div class="ln" style="top:166px"><span class="n">28</span><span class="c">        Graphics2D <span class="mo">g2d</span> = image.createGraphics();</span></div><div class="ln" style="top:184px"><span class="n">29</span><span class="c"></span></div><div class="ln" style="top:202px"><span class="n">30</span><span class="c">        <span class="k">double</span> <span class="wg">fontSize</span> = (height * 0.19) * 0.8;</span></div><div class="ln" style="top:220px"><span class="n">31</span><span class="c"><span class="cm">        // Draw text</span></span></div><div class="ln" style="top:238px"><span class="n">32</span><span class="c">        Font font = Font.<span class="it">createFont</span>(Font.<span class="sf">TRUETYPE_FONT</span>, <span class="k">new</span> File(<span class="s">"Jurassic_Park.ttf"</span>));</span></div><div class="ln" style="top:256px"><span class="n">33</span><span class="c">        <span class="mo">g2d</span>.setColor(Color.<span class="sf">BLUE</span>);</span></div><div class="ln" style="top:274px"><span class="n">34</span><span class="c">        <span class="mo">g2d</span>.setFont(font);</span></div><div class="ln" style="top:292px"><span class="n">35</span><span class="c">        <span class="mo">g2d</span>.setRenderingHint(RenderingHints.<span class="sf">KEY_TEXT_ANTIALIASING</span>, RenderingHints.<span class="sf">VALUE_TEXT_ANTIALIAS_ON</span>);</span></div><div class="ln" style="top:310px"><span class="n">36</span><span class="c">        <span class="mo">g2d</span>.setRenderingHint(RenderingHints.<span class="sf">KEY_RENDERING</span>, RenderingHints.<span class="sf">VALUE_RENDER_QUALITY</span>);</span></div><div class="ln" style="top:328px"><span class="n">37</span><span class="c">        <span class="mo">g2d</span>.setRenderingHint(RenderingHints.<span class="sf">KEY_ANTIALIASING</span>, RenderingHints.<span class="sf">VALUE_ANTIALIAS_ON</span>);</span></div><div class="ln" style="top:346px"><span class="n">38</span><span class="c">        FontMetrics fontMetrics = <span class="mo">g2d</span>.getFontMetrics();</span></div><div class="ln" style="top:364px"><span class="n">39</span><span class="c">        String textVal = args[0];</span></div><div class="ln" style="top:382px"><span class="n">40</span><span class="c">        <span class="k">int</span> textWidth = fontMetrics.stringWidth(textVal);</span></div><div class="ln" style="top:400px"><span class="n">41</span><span class="c">        <span class="k">int</span> textX = (<span class="lk">width</span> - textWidth) / 2;</span></div><div class="ln" style="top:418px"><span class="c">        <span class="k">int</span> textY = <span class="wy">(height - fontMetrics.getHeight()) / 2 + fontMetrics.getAscent()</span>;</span></div><div class="ln" style="top:436px"><span class="n">43</span><span class="c"></span></div><div class="ln" style="top:454px"><span class="n">44</span><span class="c"><span class="cm">        // Scale down the font size if the text width exceeds the image width</span></span></div><div class="ln" style="top:472px"><span class="n">45</span><span class="c"><span class="cm">//        while (textWidth &gt; width) {</span></span></div><div class="ln" style="top:490px"><span class="n">46</span><span class="c"><span class="cm">//            fontSize -= 1;</span></span></div><div class="ln" style="top:508px"><span class="n">47</span><span class="c"><span class="cm">//            font = font.deriveFont((float) fontSize);</span></span></div><div class="ln" style="top:526px"><span class="n">48</span><span class="c"><span class="cm">//            <span class="mo">g2d</span>.setFont(font);</span></span></div><div class="ln" style="top:544px"><span class="n">49</span><span class="c"><span class="cm">//            fontMetrics = <span class="mo">g2d</span>.getFontMetrics();</span></span></div><svg style="left:176px;top:217px" width="64" height="3" viewBox="0 0 64 3"><defs><pattern id="zg" width="4" height="3" patternUnits="userSpaceOnUse"><path d="M0 2.5L2 0.5L4 2.5" stroke="#9a9a9a" stroke-width="1.25" fill="none"/></pattern></defs><rect width="64" height="3" fill="url(#zg)"/></svg><svg style="left:216px;top:434px" width="512" height="3" viewBox="0 0 512 3"><defs><pattern id="zy" width="4" height="3" patternUnits="userSpaceOnUse"><path d="M0 2.5L2 0.5L4 2.5" stroke="#dcc800" stroke-width="1.25" fill="none"/></pattern></defs><rect width="512" height="3" fill="url(#zy)"/></svg><svg style="left:15.5px;top:421.5px" width="13" height="13" viewBox="0 0 13 13"><defs><radialGradient id="gbulb" cx=".5" cy=".4" r=".6"><stop offset="0" stop-color="#fffbe0"/><stop offset=".5" stop-color="#ffe85a"/><stop offset="1" stop-color="#e0b000"/></radialGradient></defs><path d="M2.9 7.4l.8 2.2h2.5l.8-2.2z" fill="#f0c820" stroke="#a88400" stroke-width=".7"/><circle cx="4.9" cy="4.3" r="4.1" fill="url(#gbulb)" stroke="#b08800" stroke-width=".9"/><rect x="3.3" y="9.5" width="3.2" height="2.6" fill="#dfe6f2" stroke="#3f4f86" stroke-width=".8"/><path d="M9.2 5.8l3 6.1h-6z" fill="#f7de10" stroke="#8a6c00" stroke-width=".9" stroke-linejoin="round"/><path d="M9.2 8v2.300" stroke="#111" stroke-width="1.1"/><rect x="8.700" y="10.700" width="1" height=".7" fill="#111"/></svg></div><div class="sb" style="left:1070px;top:27px;width:29px;height:554px"></div><div class="thumb" style="left:1070px;top:159px;width:15px;height:198px"></div><svg style="left:1073px;top:32px" width="9" height="9" viewBox="0 0 9 9"><path d="M1 5.6 L4.5 2.1 L8 5.6" fill="none" stroke="#505050" stroke-width="2"/></svg><svg style="left:1073px;top:568px" width="9" height="9" viewBox="0 0 9 9"><path d="M1 1.4 L4.5 4.9 L8 1.4" fill="none" stroke="#505050" stroke-width="2"/></svg><div class="a" style="left:1089px;top:35px;width:7px;height:7px;background:#e0a800"></div><div class="a" style="left:1087px;top:62px;width:11px;height:3px;background:#ffc000"></div><div class="a" style="left:1087px;top:222px;width:11px;height:3px;background:#a9a65c"></div><div class="a" style="left:1087px;top:254px;width:11px;height:3px;background:#a9a65c"></div><div class="a" style="left:1087px;top:258px;width:11px;height:3px;background:#a9a65c"></div><div class="a" style="left:1087px;top:266px;width:11px;height:3px;background:#a9a65c"></div><div class="a" style="left:1087px;top:270px;width:11px;height:3px;background:#a9a65c"></div><div class="a" style="left:1087px;top:278px;width:11px;height:3px;background:#a9a65c"></div><div class="a" style="left:1087px;top:286px;width:11px;height:3px;background:#a9a65c"></div><div class="a" style="left:1087px;top:346px;width:11px;height:3px;background:#a9a65c"></div><div class="a" style="left:1087px;top:354px;width:11px;height:3px;background:#a9a65c"></div><div class="a" style="left:1087px;top:410px;width:11px;height:3px;background:#a9a65c"></div><div class="a" style="left:1087px;top:418px;width:11px;height:3px;background:#a9a65c"></div><div class="a" style="left:1087px;top:310px;width:11px;height:3px;background:#ffc000"></div><div class="a" style="left:1088px;top:379px;width:9px;height:1px;background:#444"></div><div class="a" style="left:1091px;top:378px;width:3px;height:3px;background:#444"></div><div class="a" style="left:0;top:580px;width:1099px;height:20px;background:#f0f0f0;border-top:1px solid #a0a5ad"></div><svg style="left:9px;top:583px" width="16" height="15" viewBox="0 0 16 15"><rect x="0.8" y="7" width="8.2" height="7.6" fill="#9cc4ee" stroke="#3f6ea8" stroke-width=".9"/><path d="M7.2 0.8l4.8 4.8-4.8 4.8-4.8-4.8z" fill="#f7cf72" stroke="#a8720e" stroke-width=".9"/><circle cx="11.6" cy="10.6" r="4" fill="#f49a9a" stroke="#c25050" stroke-width=".9"/></svg><span class="a" style="left:29px;top:584px;line-height:13px;white-space:nowrap">ChudwayMapGenerator.LogoGenerator</span><svg style="left:225px;top:584px" width="12" height="12" viewBox="0 0 12 12"><path d="M0.6 0.6L5.4 6 0.6 11.4M5.6 0.6L10.4 6 5.6 11.4" fill="none" stroke="#555" stroke-width="1"/><path d="M0.6 0.6h5M0.6 11.4h5" stroke="#555" stroke-width="1"/></svg><svg style="left:252px;top:584px" width="12" height="12" viewBox="0 0 12 12"><circle cx="6" cy="6" r="5.4" fill="#f3a0a0" stroke="#c24a4a" stroke-width="1"/><rect x="5" y="0.8" width="2" height="10.4" fill="#fde3e3" stroke="#c24a4a" stroke-width=".8"/></svg><span class="a" style="left:268px;top:584px;line-height:13px">main</span><svg style="left:295px;top:584px" width="12" height="12" viewBox="0 0 12 12"><path d="M0.6 0.6L5.4 6 0.6 11.4M5.6 0.6L10.4 6 5.6 11.4" fill="none" stroke="#555" stroke-width="1"/><path d="M0.6 0.6h5M0.6 11.4h5" stroke="#555" stroke-width="1"/></svg><svg style="left:1085px;top:586px" width="8" height="8" viewBox="0 0 8 8"><path d="M0.6 0.6L7.4 7.4M7.4 0.6L0.6 7.4" stroke="#333" stroke-width="1.5" fill="none"/></svg></div>
<div id="status"><div class="a" style="left:1222px;top:6px;width:1px;height:14px;background:#a0a0a0"></div><div class="a" style="left:1333px;top:6px;width:1px;height:14px;background:#a0a0a0"></div><span class="a" style="left:1268px;top:7px;line-height:13px">53:1</span><span class="a" style="left:1338px;top:7px;line-height:13px">INS</span></div>
<div id="taskbar"><svg style="left:16px;top:12px" width="17" height="17" viewBox="0 0 17 17"><path d="M0 2.4L6.9 1.4V8H0zM7.8 1.3L16.6 0V8H7.8zM0 8.9h6.9v6.6L0 14.5zM7.8 8.9h8.8v8L7.8 15.6z" fill="#fff"/></svg><div id="tsearch"><svg style="left:13px;top:11px" width="17" height="18" viewBox="0 0 17 18"><circle cx="10" cy="7" r="5.6" fill="none" stroke="#f0f0f0" stroke-width="1.3"/><path d="M6 11.2L0.8 16.6" stroke="#f0f0f0" stroke-width="1.3"/></svg><span class="ph">Type here to search</span></div><div class="a" style="left:780px;top:0;width:48px;height:40px;background:#3e3e3e"></div><div class="tul" style="left:343px;width:40px"></div><div class="tul" style="left:392px;width:40px"></div><div class="tul" style="left:441px;width:40px"></div><div class="tul" style="left:490px;width:40px"></div><div class="tul" style="left:539px;width:40px"></div><div class="tul" style="left:588px;width:40px"></div><div class="tul" style="left:637px;width:40px"></div><div class="tul" style="left:686px;width:40px"></div><div class="tul" style="left:735px;width:40px"></div><div class="tul" style="left:780px;width:48px"></div><div class="tul" style="left:833px;width:40px"></div><div class="tul" style="left:472px;width:9px;background:#5a8db8"></div><div class="tul" style="left:521px;width:9px;background:#5a8db8"></div><svg style="left:350px;top:7px" width="26" height="26" viewBox="0 0 26 26"><defs><linearGradient id="ge1" x1="0" y1="0" x2="1" y2="1"><stop offset="0" stop-color="#35c1f1"/><stop offset=".5" stop-color="#1b9de2"/><stop offset="1" stop-color="#0c59a4"/></linearGradient><linearGradient id="ge2" x1="0" y1="0" x2="1" y2="0"><stop offset="0" stop-color="#2bb0ec"/><stop offset=".55" stop-color="#33c6c4"/><stop offset="1" stop-color="#7bdc4a"/></linearGradient></defs><path d="M13 1C6 1 1 6.5 1 13.5 1 20 6 25 13 25c3 0 5.500-.8 7.500-2.200L19 20c-6 2.500-10.500-1.500-10-6 .3-2.500 2.300-4 4.500-4 2 0 3.500 1.200 3.500 2.800 0 1.200-.8 2-.8 2.600 0 .8 1.500 1.300 3.800.9 3-.6 5-3 5-6C25 5 19.500 1 13 1z" fill="url(#ge1)"/><path d="M2 9.500C4 4 8.500 1 13 1c6.500 0 12 4 12 9.300 0 3-2 5.400-5 6-2.300.4-3.800-.1-3.800-.9 0-.6.800-1.400.8-2.600C17 10.200 14.500 8 11 8 7 8 3.500 10.500 2 9.500z" fill="url(#ge2)"/></svg><svg style="left:400px;top:8px" width="23" height="23" viewBox="0 0 23 23"><rect x="0.5" y="0.5" width="18" height="22" fill="#e8e8f0" stroke="#a0a0b0" stroke-width="1"/><rect x="2" y="2" width="15" height="13" fill="#2a54c8"/><path d="M2 15c4-6 9-8 15-9v9z" fill="#9ec4f0"/><ellipse cx="12" cy="6" rx="4" ry="2.500" fill="#e8f0fb"/><rect x="2" y="15" width="15" height="4" fill="#27408a"/><path d="M8 19L22 6" stroke="#d0283a" stroke-width="2"/><path d="M5 22l4-4.500" stroke="#ddd" stroke-width="1.500"/></svg><svg style="left:448px;top:8px" width="24" height="24" viewBox="0 0 24 24"><path d="M8 3l14-1-2 20-17-3z" fill="#d8c080"/><path d="M7 2l13 0-3 19-15-3z" fill="#8fd0d8" stroke="#5a9aa8" stroke-width=".6"/><path d="M7 2l13 0-.5 3-13.500 0z" fill="#c8d0d8"/><path d="M9 6l-5 11 12 2.500 2-13z" fill="#5fb0c0" opacity=".7"/><path d="M8 1.500v2M10.500 1.300v2M13 1.300v2M15.500 1.300v2M18 1.300v2" stroke="#666" stroke-width=".8"/></svg><svg style="left:499px;top:10px" width="22" height="19" viewBox="0 0 22 19"><path d="M0.500 1.500h7l2 2h12v14.500h-21z" fill="#f0b82a"/><path d="M0.500 4.500h21v13.500h-21z" fill="#fbd867"/><path d="M4 18v-6.500h14V18h-3.500v-3.500h-7V18z" fill="#3f8fe0"/></svg><svg style="left:547px;top:10px" width="23" height="19" viewBox="0 0 23 19"><rect x="0.500" y="0.500" width="22" height="18" fill="#0c0c0c" stroke="#d0d0d0" stroke-width="1"/><rect x="1" y="1" width="21" height="2.400" fill="#c8c8c8"/></svg><span class="a" style="left:549px;top:14px;font-size:6px;line-height:6px;color:#ddd;font-family:'Liberation Mono',monospace;font-weight:bold">C:\_</span><svg style="left:596px;top:8px" width="24" height="24" viewBox="0 0 24 24"><defs><linearGradient id="gnpp" x1="0" y1="0" x2="0" y2="1"><stop offset="0" stop-color="#f4f4f4"/><stop offset=".45" stop-color="#c8e8a0"/><stop offset="1" stop-color="#58b818"/></linearGradient></defs><path d="M0.500 1h14l4 4v18.500h-18z" fill="url(#gnpp)" stroke="#b0b0b0" stroke-width="1"/><path d="M4.500 7.500v7M7 11h2M11 11h2" stroke="#222" stroke-width="1.300"/><path d="M3.500 7.500h2" stroke="#222" stroke-width="1"/><path d="M21.500 0.500l2 1.500-8.500 15.500-2.500 1 .5-2.700z" fill="#f0b030" stroke="#a86a10" stroke-width=".7"/><path d="M20.300 2.400l2 1.500" stroke="#d04040" stroke-width="1.400"/></svg><svg style="left:645px;top:10px" width="24" height="22" viewBox="0 0 24 22"><rect x="4" y="0.500" width="19" height="14" rx="1" fill="#e8eaec" stroke="#a8acb0" stroke-width="1"/><rect x="5.500" y="2" width="16" height="11" fill="#f8fbfe"/><path d="M6 11l2.500-3 1.500 2 2-6.500 2 7.500 2-5 1.500 3.500 2.500-1.500" fill="none" stroke="#3a7ad0" stroke-width="1.100"/><rect x="1" y="4" width="3.500" height="11" fill="#c8ccd0" stroke="#989ca0" stroke-width=".6"/><path d="M11 14.500h5v3h-5z" fill="#b8bcc0"/><ellipse cx="13.500" cy="19" rx="6.500" ry="2.300" fill="#d8dcde" stroke="#a0a4a8" stroke-width=".7"/></svg><svg style="left:694px;top:10px" width="23" height="19" viewBox="0 0 23 19"><defs><linearGradient id="gwin" x1="0" y1="0" x2="0" y2="1"><stop offset="0" stop-color="#2f6ea8"/><stop offset="1" stop-color="#68b088"/></linearGradient></defs><rect x="0.500" y="0.500" width="22" height="18" fill="#f4f6f8" stroke="#b0b8c0" stroke-width="1"/><rect x="1" y="1" width="21" height="2.300" fill="#dfe5ec"/><rect x="2.500" y="4.500" width="10.500" height="12.500" fill="url(#gwin)"/><path d="M15 6h3M15 8.500h3M15 11h3M15 13.500h3" stroke="#a8b0b8" stroke-width="1"/><rect x="19.300" y="4.500" width="1.500" height="7" fill="#3a8ad8"/><rect x="18" y="1.400" width="3" height="1.300" fill="#4a90e0"/></svg><svg style="left:744px;top:7px" width="22" height="25" viewBox="0 0 22 25"><path d="M11 0.500L21.500 6 11 11.500 0.500 6z" fill="#6cc349"/><path d="M0.500 6L11 11.500V24.500L0.500 18.500z" fill="#8a5a3a"/><path d="M21.500 6L11 11.500V24.500L21.500 18.500z" fill="#6b4429"/><path d="M0.500 6L11 11.500v3l-2.500-1v1.500l-3-1.500v-2l-2.500-1v2L0.500 9.500z" fill="#5aad3a"/><path d="M21.500 6L11 11.500v3l2.500-1v2l3-1.500v-2l2.500-1v1.500l2.500-1.500z" fill="#4c9a30"/><path d="M3 14l2 1v2l-2-1zM6 19l2 1v2l-2-1zM14 19l2-1v2l-2 1zM17 14l2-1v2l-2 1z" fill="#9a6a48" opacity=".7"/></svg><svg style="left:792px;top:7px" width="24" height="25" viewBox="0 0 24 25"><path d="M12 1.200c1 0 9.800 3.600 10.300 4.500.4.700.4 12.500 0 13.300-.5.900-9.300 5-10.300 5s-9.800-4.100-10.300-5c-.4-.8-.4-12.600 0-13.300C2.200 4.800 11 1.200 12 1.200z" fill="#c5d8ee" stroke="#232a6a" stroke-width="1.500"/><path d="M2.300 6.300L12 10.600l9.700-4.300L12 2.300z" fill="#cfe3ea"/><path d="M2.300 6.800L11.500 11v12L2.300 18.600z" fill="#8fb0e6"/><path d="M21.700 6.800L12.500 11v12l9.200-4.400z" fill="#d9e6f2"/></svg><div class="a" style="left:841px;top:11px;width:24px;height:18px;background:#fff"></div><div class="a" style="left:844px;top:14px;width:18px;height:12px;background:#000"></div><span class="a" style="left:845px;top:13px;font-size:14px;line-height:14px;font-weight:bold;color:#fff;letter-spacing:-.3px">7z</span><svg style="left:1128px;top:17px" width="15" height="8" viewBox="0 0 15 8"><path d="M1 7.200L7.500 1 14 7.200" fill="none" stroke="#fff" stroke-width="1.400"/></svg><svg style="left:1153px;top:13px" width="12" height="14" viewBox="0 0 12 14"><rect x="0" y="0" width="12" height="14" fill="#4fb4f5"/><rect x="0" y="0" width="12" height="4" fill="#e8e8e8"/><path d="M1 1h10M1 2.500h10" stroke="#555" stroke-width=".7" stroke-dasharray="1 1"/></svg><div class="a" style="left:1176px;top:12px;width:14px;height:4px;background:#f4f0c8"></div><span class="a" style="left:1174px;top:17px;font-size:10.500px;line-height:11px;color:#fff;letter-spacing:-.3px;border-bottom:1px solid #ddd;width:18px">6,55</span><svg style="left:1201px;top:13px" width="15" height="14" viewBox="0 0 15 14"><path d="M1 13C1 6.500 6.500 1 13.500 1M4.500 13c0-4.700 4-8.500 9-8.500M8 13c0-3 2.500-5 5.500-5" fill="none" stroke="#bbb" stroke-width="1.300"/><circle cx="12.500" cy="12.300" r="1.300" fill="#bbb"/></svg><svg style="left:1223px;top:13px" width="17" height="14" viewBox="0 0 17 14"><path d="M1 5h2.500L7 1.500v11L3.500 9H1z" fill="none" stroke="#fff" stroke-width="1.100" stroke-linejoin="round"/><path d="M9.500 4.500c1.400 1.400 1.400 3.600 0 5M11.800 2.600c2.400 2.400 2.400 6.400 0 8.800M14 1c3.300 3.300 3.300 8.700 0 12" fill="none" stroke="#fff" stroke-width="1"/></svg><span class="a" style="left:1251px;top:5px;font-size:11.500px;line-height:13px;color:#fff;white-space:nowrap">11:48 PM</span><span class="a" style="left:1248px;top:23px;font-size:11.500px;line-height:13px;color:#fff;white-space:nowrap;letter-spacing:.18px">3/23/2024</span><svg style="left:1319px;top:12px" width="16" height="15" viewBox="0 0 16 15"><path d="M0.500 0.500h14.500v10.500h-9.500l-3 3v-3h-2z" fill="#fff"/><path d="M3 3.300h9.500M3 5.600h9.500M3 7.900h9.500" stroke="#1c1c1c" stroke-width="1"/></svg><div class="a" style="left:1327px;top:19px;width:16px;height:16px;border-radius:8px;background:#2e2e2e;border:1px solid #9a9a9a"></div><span class="a" style="left:1332px;top:22px;font-size:10px;line-height:10px;color:#fff;font-weight:bold">5</span><div class="a" style="left:1355px;top:0;width:1px;height:40px;background:#5a5a5a"></div></div>
</body>
</html>
